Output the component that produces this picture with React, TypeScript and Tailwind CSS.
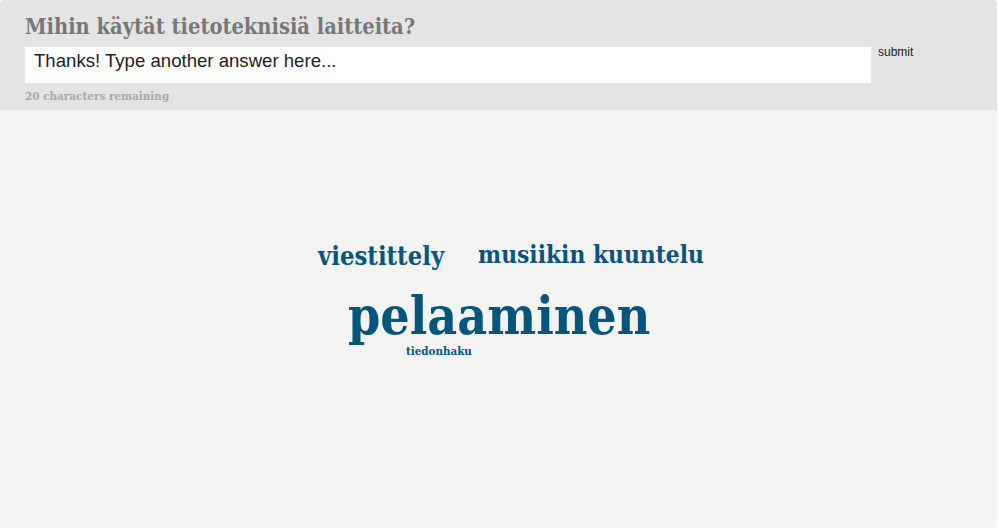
import React from 'react';

const words = [
  { text: 'viestittely', left: 318, top: 134, size: 25.4 },
  { text: 'musiikin kuuntelu', left: 478, top: 133, size: 24.3 },
  { text: 'pelaaminen', left: 348, top: 181, size: 51.4 },
  { text: 'tiedonhaku', left: 406, top: 236, size: 11.5 },
];

const serif = '"DejaVu Serif Condensed", "DejaVu Serif", serif';
const sans = '"Liberation Sans", Arial, sans-serif';

export default function App() {
  return (
    <div className="w-[999px] h-[530px] bg-white">
      <div className="w-[997px] h-[528px] rounded-[4px] overflow-hidden flex flex-col bg-[#f3f3f3]">
        <div className="h-[110px] bg-[#e4e4e4] px-[25px] pt-[12px]" style={{ fontFamily: serif }}>
          <h1 className="text-[21.7px] leading-[30px] font-bold text-[#777]">Mihin käytät tietoteknisiä laitteita?</h1>
          <div className="flex items-start mt-[5px]">
            <input
              className="w-[846px] h-[36px] bg-white px-[9px] pb-[8px] text-[18.6px] text-[#222] outline-none placeholder:text-[#222]"
              style={{ fontFamily: sans }}
              placeholder="Thanks! Type another answer here..."
            />
            <button className="ml-[7px] text-[12px] leading-[14px] text-[#222] -mt-[2px]" style={{ fontFamily: sans }}>
              submit
            </button>
          </div>
          <div className="mt-[6px] text-[11.6px] leading-[14px] font-bold text-[#aaa]">20 characters remaining</div>
        </div>
        <div className="relative flex-1" style={{ fontFamily: serif }}>
          {words.map((w) => (
            <span
              key={w.text}
              className="absolute whitespace-nowrap font-bold text-[#06557d] leading-none"
              style={{ left: w.left, top: w.top, fontSize: w.size }}
            >
              {w.text}
            </span>
          ))}
        </div>
      </div>
    </div>
  );
}
